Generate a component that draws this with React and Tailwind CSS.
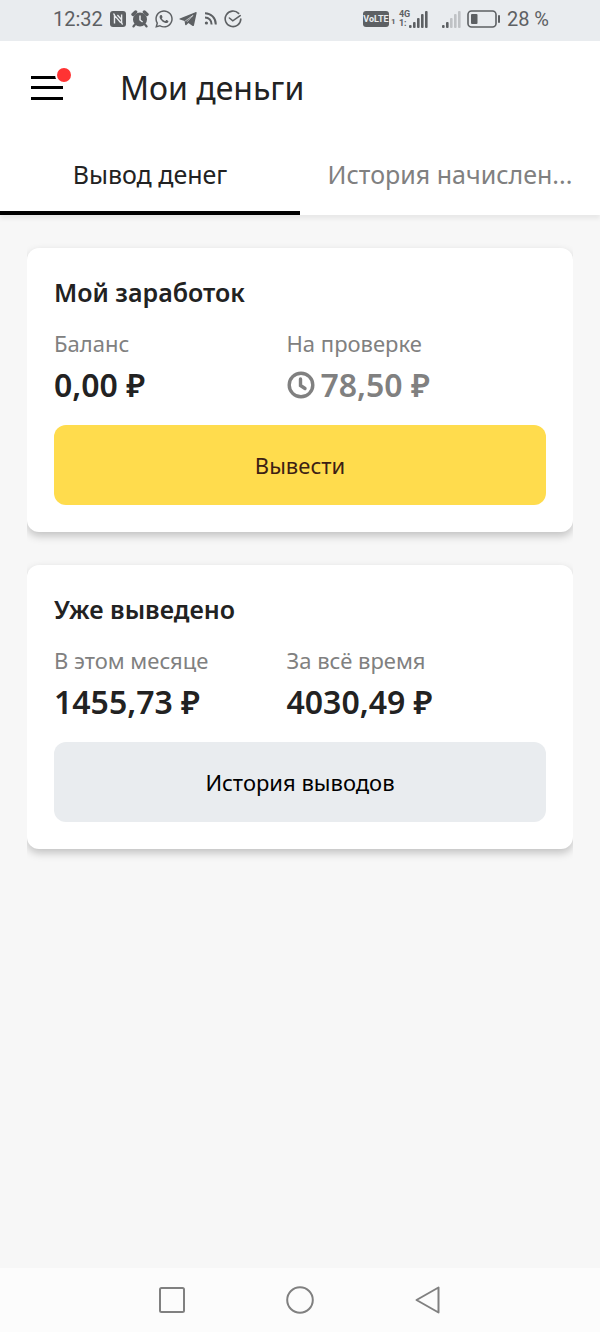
import { useState } from 'react';
import { FaWhatsapp } from 'react-icons/fa';

const NfcIcon = () => (
  <svg viewBox="0 0 16 18" className="w-4 h-[18px]" aria-hidden="true">
    <rect y="1" width="16" height="16" rx="3" fill="#5d6063" />
    <path
      d="M3.4 3.6C4.2 4 4.5 4.6 4.5 5.4V13.4M4.5 5.4L10.8 12.8M7.4 5L11.6 9.6V4.6M11.6 9V12.6C11.6 13.4 12 14 12.8 14.4"
      fill="none"
      stroke="#e9ecef"
      strokeWidth="1.4"
    />
  </svg>
);

const AlarmIcon = () => (
  <svg viewBox="0 0 18 18" className="w-[18px] h-[18px]" aria-hidden="true">
    <circle cx="9" cy="9.5" r="7" fill="#5d6063" />
    <path d="M2 4.4L4.6 2M16 4.4L13.4 2" stroke="#5d6063" strokeWidth="3.4" strokeLinecap="round" />
    <path d="M4 14.6L2.4 16.4M14 14.6L15.6 16.4" stroke="#5d6063" strokeWidth="2.2" strokeLinecap="round" />
    <path d="M9 5.4V10L11.6 12" fill="none" stroke="#e9ecef" strokeWidth="1.5" />
  </svg>
);

const TelegramIcon = () => (
  <svg viewBox="0 0 18 18" className="w-[18px] h-[18px]" aria-hidden="true">
    <path
      d="M0.8 8.6L16.4 2.2C17.2 1.9 17.8 2.3 17.6 3.2L15 15.2C14.8 16.1 14 16.3 13.3 15.8L9.4 12.9L7.4 14.9C6.9 15.4 6.2 15.2 6.1 14.5L5.6 11L0.9 9.6C0.2 9.4 0.2 8.8 0.8 8.6Z"
      fill="#5d6063"
    />
    <path d="M6.2 11L14 5.4L8 11.8" fill="none" stroke="#e9ecef" strokeWidth="0.7" />
  </svg>
);

const CastIcon = () => (
  <svg viewBox="0 0 13 13" className="w-[13px] h-[13px]" fill="none" stroke="#5d6063" strokeWidth="2" aria-hidden="true">
    <path d="M1 1.2C7 1.2 11.8 6 11.8 12.4M1 5.4C4.8 5.4 7.6 8.4 7.6 12.4" />
    <circle cx="2.4" cy="11" r="1.6" fill="#5d6063" stroke="none" />
  </svg>
);

const CheckCircleIcon = () => (
  <svg viewBox="0 0 18 18" className="w-[18px] h-[18px]" fill="none" stroke="#5d6063" strokeWidth="1.6" strokeLinecap="round" aria-hidden="true">
    <path d="M14.6 3.4A7.8 7.8 0 1 0 16.8 9" />
    <path d="M5.4 8L8.8 10.8L16.2 5.6" />
  </svg>
);

const SignalBars = ({ active }) => (
  <svg viewBox="0 0 19 18" className="w-[19px] h-[18px]" aria-hidden="true">
    {[3, 6, 10, 14, 17].map((h, i) => (
      <rect key={h} x={i * 4} y={18 - h} width="2.6" height={h} rx="1" fill={i < active ? '#5d6063' : '#bfc2c5'} />
    ))}
  </svg>
);

const BatteryIcon = () => (
  <svg viewBox="0 0 34 18" className="w-[34px] h-[18px]" aria-hidden="true">
    <rect x="1" y="1" width="28" height="16" rx="3.5" fill="none" stroke="#5d6063" strokeWidth="1.6" />
    <rect x="4" y="4" width="6.5" height="10" rx="1" fill="#5d6063" />
    <rect x="31" y="5" width="2" height="8" rx="1" fill="#5d6063" />
  </svg>
);

const ClockIcon = () => (
  <svg viewBox="0 0 28 28" className="w-7 h-7" fill="none" stroke="currentColor" strokeWidth="3.4" aria-hidden="true">
    <circle cx="14" cy="14" r="11.8" />
    <path d="M13.5 8V14.5L18 17.5" strokeLinecap="round" />
  </svg>
);

const StatusBar = () => (
  <div className="h-[41px] pl-[53px] pr-[51px] pb-1 bg-[#e9ecef] text-[#5d6063] flex items-center justify-between font-['Roboto',sans-serif] text-[20px]">
    <div className="flex items-center gap-[5px]">
      <span className="w-[52px] whitespace-nowrap">12:32</span>
      <NfcIcon />
      <AlarmIcon />
      <FaWhatsapp className="w-5 h-5" />
      <TelegramIcon />
      <div className="px-[2px]">
        <CastIcon />
      </div>
      <CheckCircleIcon />
    </div>
    <div className="flex items-center">
      <span className="w-[26px] h-4 rounded-[3px] bg-[#5d6063] text-[#e9ecef] text-[9px] leading-4 font-bold text-center">VoLTE</span>
      <span className="w-[10px] pl-[2px] pt-[6px] text-[8px] leading-3 font-bold">1</span>
      <div className="w-[10px] text-[9px] leading-[9px] font-bold">
        <div>4G</div>
        <div>1:</div>
      </div>
      <SignalBars active={5} />
      <div className="pl-[14px] pr-[6px]">
        <SignalBars active={2} />
      </div>
      <BatteryIcon />
      <span className="pl-[6px] whitespace-nowrap">28 %</span>
    </div>
  </div>
);

const Stat = ({ label, value, pending }) => (
  <div>
    <dt className="text-[22px] leading-7 text-[#808080]">{label}</dt>
    <dd
      className={
        pending
          ? 'mt-2 flex items-center gap-[6px] text-[32px] leading-10 font-semibold text-[#808080]'
          : 'mt-2 text-[32px] leading-10 font-semibold text-[#222222]'
      }
    >
      {pending && <ClockIcon />}
      {value}
    </dd>
  </div>
);

const Card = ({ title, stats, children }) => (
  <section className="p-[27px] bg-white rounded-xl shadow-[0_4px_8px_rgba(0,0,0,0.22)]">
    <h2 className="mb-5 text-[25px] leading-[34px] font-semibold text-[#222222]">{title}</h2>
    <dl className="mb-5 grid grid-cols-[233fr_260fr]">
      {stats.map((stat) => (
        <Stat key={stat.label} {...stat} />
      ))}
    </dl>
    {children}
  </section>
);

const App = () => {
  const [tab, setTab] = useState('withdraw');

  const tabs = [
    { id: 'withdraw', label: 'Вывод денег' },
    { id: 'history', label: 'История начислен...' },
  ];

  return (
    <div className="min-h-screen flex flex-col bg-[#f7f7f7] font-['Noto_Sans',sans-serif]">
      <StatusBar />

      <header className="bg-white shadow-[0_4px_4px_rgba(0,0,0,0.06)]">
        <div className="h-[93px] pl-[31px] flex items-center gap-[57px]">
          <button type="button" aria-label="Меню" className="relative w-8 h-6 flex flex-col justify-between">
            <span className="w-full h-[3px] bg-black"></span>
            <span className="w-full h-[3px] bg-black"></span>
            <span className="w-full h-[3px] bg-black"></span>
            <span className="absolute -top-2 -right-2 w-[14px] h-[14px] rounded-full bg-[#ff3333] ring-2 ring-white"></span>
          </button>
          <h1 className="text-[32px] leading-10 text-[#222222]">Мои деньги</h1>
        </div>

        <div role="tablist" className="grid grid-cols-2">
          {tabs.map((item) => (
            <button
              key={item.id}
              type="button"
              role="tab"
              aria-selected={tab === item.id}
              onClick={() => setTab(item.id)}
              className={
                tab === item.id
                  ? 'h-[81px] pt-1 border-b-4 border-black whitespace-nowrap text-[25px] text-[#222222]'
                  : 'h-[81px] pt-1 border-b-4 border-transparent whitespace-nowrap text-[25px] text-[#808080]'
              }
            >
              {item.label}
            </button>
          ))}
        </div>
      </header>

      <main className="flex-1 mt-[33px] mx-[27px] flex flex-col gap-[33px] overflow-x-clip">
        <Card
          title="Мой заработок"
          stats={[
            { label: 'Баланс', value: '0,00 ₽' },
            { label: 'На проверке', value: '78,50 ₽', pending: true },
          ]}
        >
          <button type="button" className="w-full h-20 rounded-xl bg-[#ffdc4d] text-[22px] text-[#3d1f14]">
            Вывести
          </button>
        </Card>

        <Card
          title="Уже выведено"
          stats={[
            { label: 'В этом месяце', value: '1455,73 ₽' },
            { label: 'За всё время', value: '4030,49 ₽' },
          ]}
        >
          <button type="button" className="w-full h-20 rounded-xl bg-[#e9ecef] text-[22px] text-black">
            История выводов
          </button>
        </Card>
      </main>

      <nav className="h-16 px-[108px] bg-[#fcfcfc] grid grid-cols-3 items-center">
        <button type="button" aria-label="Недавние" className="flex justify-center">
          <svg viewBox="0 0 28 28" className="w-7 h-7" fill="none" stroke="#808080" strokeWidth="2">
            <rect x="2" y="2" width="24" height="24" rx="1.5" />
          </svg>
        </button>
        <button type="button" aria-label="Домой" className="flex justify-center">
          <svg viewBox="0 0 28 28" className="w-7 h-7" fill="none" stroke="#808080" strokeWidth="2">
            <circle cx="14" cy="14" r="12.8" />
          </svg>
        </button>
        <button type="button" aria-label="Назад" className="flex justify-center">
          <svg viewBox="0 0 28 28" className="w-7 h-7" fill="none" stroke="#808080" strokeWidth="2" strokeLinejoin="round">
            <path d="M24.5 1.5V26.5L2.5 14Z" />
          </svg>
        </button>
      </nav>
    </div>
  );
};

export default App;
